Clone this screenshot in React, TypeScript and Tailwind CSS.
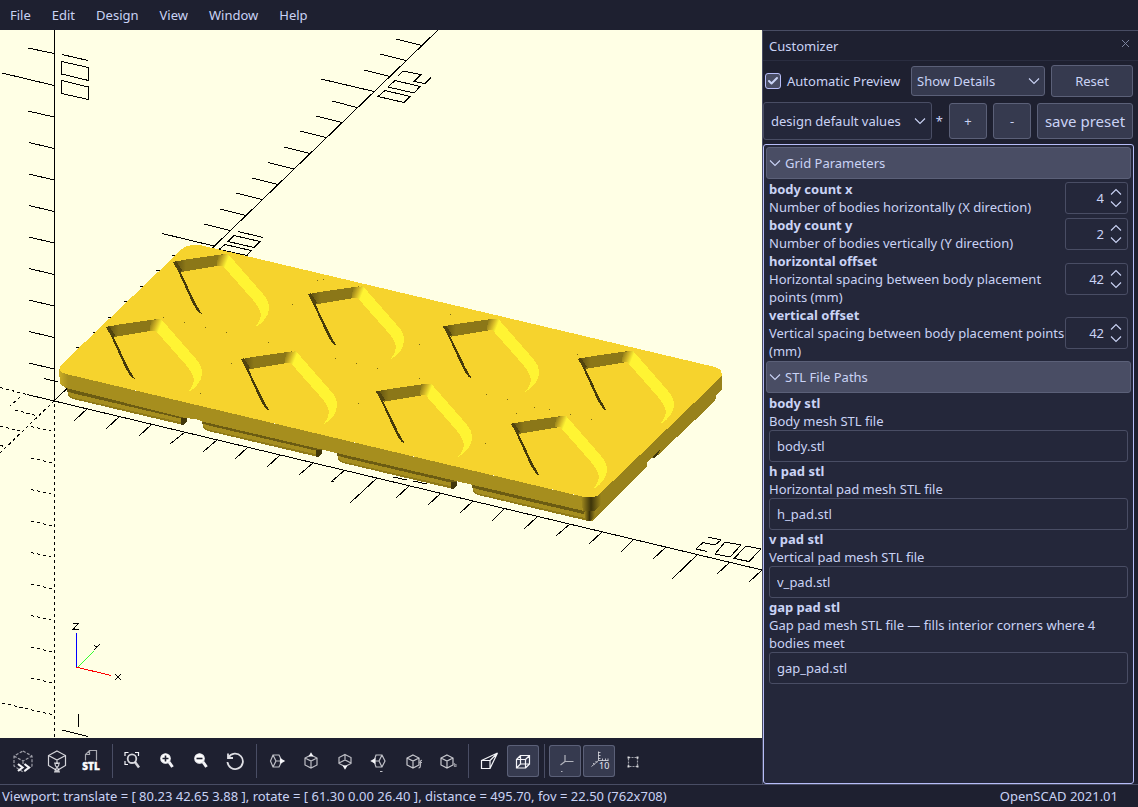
import React, { useId, useState } from "react";
import { Check, X } from "lucide-react";

const menus = ["File", "Edit", "Design", "View", "Window", "Help"];

const CUBE = "M16 10l6 3v7l-6 3-6-3v-7zM10 13l6 3 6-3M16 16v7";

const toolGroups = [
  [
    {
      label: "Preview",
      icon: (
        <>
          <path
            d="M16 6l9 5v10l-9 6-9-6v-10zM7 11l9 5 9-5M16 16v3"
            strokeDasharray="3 1.5"
            opacity="0.6"
          />
          <path d="M11 19l4.5 3.5-4.5 3.5M17.5 19l4.5 3.5-4.5 3.5" strokeWidth="2.2" />
        </>
      ),
    },
    {
      label: "Render",
      icon: (
        <>
          <path
            d="M16 6l8.500 4.500v10l-8.500 5-8.500-5v-10zM7.500 10.500l8.500 4.500 8.500-4.500M16 15v4"
            opacity="0.85"
          />
          <path
            d="M13 18h6M13 27h6M14 18.500q0 2.500 2 4q-2 1.500-2 4h4q0-2.500-2-4q2-1.500 2-4z"
            opacity="0.8"
          />
        </>
      ),
    },
    {
      label: "Export as STL",
      icon: (
        <>
          <path d="M10.5 15.5v-6l4-4h7v10M14.5 5.500v4h-4" opacity="0.65" />
          <text
            x="16"
            y="25"
            textAnchor="middle"
            fontSize="10"
            fontWeight="900"
            fill="#fff"
            strokeWidth="0.4"
          >
            STL
          </text>
        </>
      ),
    },
  ],
  [
    {
      label: "View All",
      icon: (
        <>
          <path d="M8 11v-3.500h3.500M18 7.500h3.500v3.500M8 16v3.500h3" />
          <circle cx="15" cy="13.7" r="4.3" strokeWidth="1.8" opacity="0.85" />
          <path d="M18 17l4 5.500" strokeWidth="2.5" opacity="0.85" />
        </>
      ),
    },
    {
      label: "Zoom In",
      icon: (
        <>
          <circle cx="14.5" cy="13.5" r="4.7" fill="#fff" />
          <path d="M18 17l3.500 5" strokeWidth="3" />
          <path d="M11.5 13.500h6M14.500 10.500v6" stroke="#1e2030" strokeWidth="1.6" />
        </>
      ),
    },
    {
      label: "Zoom Out",
      icon: (
        <>
          <circle cx="14.5" cy="13.5" r="4.7" fill="#fff" />
          <path d="M18 17l3.500 5" strokeWidth="3" />
          <path d="M11.5 13.500h6" stroke="#1e2030" strokeWidth="1.6" />
        </>
      ),
    },
    {
      label: "Reset View",
      icon: <path d="M9.500 12.500a7.700 7.700 0 1 1-1 4.500M9 8.500v4.500h5" strokeWidth="1.8" opacity="0.9" />,
    },
  ],
  [
    {
      label: "Right",
      icon: (
        <>
          <path d="M12 10h6l3 6-3 6h-6l-2.500-6zM12 10l3 6-3 6M15 16h5" opacity="0.75" />
          <path d="M19.500 14l3.500 2-3.500 2z" fill="#fff" />
        </>
      ),
    },
    {
      label: "Top",
      icon: (
        <>
          <path d={CUBE} opacity="0.75" />
          <path d="M14.500 11l1.500-2.500 1.500 2.500z" fill="#fff" />
        </>
      ),
    },
    {
      label: "Bottom",
      icon: (
        <>
          <path d="M16 9.500l6 3v6l-6 3-6-3v-6zM10 18l6-3 6 3M16 9.500v5.500" opacity="0.75" />
          <path d="M14.500 21l1.500 2.500 1.500-2.500z" fill="#fff" />
        </>
      ),
    },
    {
      label: "Left",
      icon: (
        <>
          <path d="M13 10h6l3 6-3 6h-6l-2-6zM19 10l-3 6 3 6M16 16h-5M17 26.500h2.500" opacity="0.75" />
          <path d="M12 14l-3.500 2 3.500 2z" fill="#fff" />
        </>
      ),
    },
    {
      label: "Front",
      icon: (
        <>
          <path d={CUBE} opacity="0.8" />
          <path d="M25 15.500q-1.500-0.500-1.500 1.500v3q0 3-2 3M22.500 17.500h2.500" opacity="0.7" />
        </>
      ),
    },
    {
      label: "Back",
      icon: (
        <>
          <path d={CUBE} opacity="0.8" />
          <path d="M23.500 18v3.500h1.500v-2h-1.500" opacity="0.5" />
        </>
      ),
    },
  ],
  [
    {
      label: "Perspective",
      icon: (
        <path d="M8.500 15.500h8.500v8h-8.500zM8.500 15.500l16-7.500-7.500 7.500M24.500 8l-7.500 15.500" />
      ),
    },
    {
      label: "Orthogonal",
      active: true,
      icon: (
        <path d="M9.500 14.500h9v8.500h-9zM13.500 10.500h9v8.500h-9zM9.500 14.500l4-4M18.500 14.500l4-4M9.500 23l4-4M18.500 23l4-4" />
      ),
    },
  ],
  [
    {
      label: "Show Axes",
      active: true,
      icon: <path d="M16 10v6.500h8.500M16 16.500l-4.500 3.500M12 26.500h1.500" opacity="0.65" />,
    },
    {
      label: "Show Scale Markers",
      active: true,
      icon: (
        <>
          <path
            d="M15.500 6.500v9h10M15.500 7.500h2M15.500 10.500h2M15.500 13.500h2M19.500 15.500v-2M22.500 15.500v-2M25 15.500v-2M15.500 15.500l-7 6M12.500 16l1.500 1.500M10 18l1.500 1.500"
            strokeWidth="1"
            opacity="0.7"
          />
          <text x="16" y="24" fontSize="9" fill="#e6e9f5" stroke="none">
            10
          </text>
        </>
      ),
    },
    {
      label: "Show Edges",
      icon: (
        <>
          <path d="M11.500 12.500h9v9h-9z" strokeDasharray="2 1" opacity="0.6" />
          <path
            d="M10.500 11.500h2v2h-2zM19.500 11.500h2v2h-2zM10.500 20.500h2v2h-2zM19.500 20.500h2v2h-2z"
            fill="#fff"
            stroke="none"
            opacity="0.8"
          />
        </>
      ),
    },
  ],
];

const numberParams = [
  { name: "body count x", text: "Number of bodies horizontally (X direction)", value: 4 },
  { name: "body count y", text: "Number of bodies vertically (Y direction)", value: 2 },
  {
    name: "horizontal offset",
    text: "Horizontal spacing between body placement points (mm)",
    value: 42,
  },
  {
    name: "vertical offset",
    text: "Vertical spacing between body placement points (mm)",
    value: 42,
  },
];

const fileParams = [
  { name: "body stl", text: "Body mesh STL file", value: "body.stl" },
  { name: "h pad stl", text: "Horizontal pad mesh STL file", value: "h_pad.stl" },
  { name: "v pad stl", text: "Vertical pad mesh STL file", value: "v_pad.stl" },
  {
    name: "gap pad stl",
    text: "Gap pad mesh STL file — fills interior corners where 4 bodies meet",
    value: "gap_pad.stl",
  },
];

// axis, ticks and scale digits, in viewport coordinates
const axisLines = [
  "M54.500 30V401M27 394.500L762 570M54 401L438 30",
  "M28 48l26 5.500M2 73l52 12.500M28 111l26 6M29 142.500l25 6M29 174l25 6M29 205.500l25 6M29 237l25 6M29 268.500l25 6M29 300l25 6M29 331.500l25 6M29 363l25 6M44 378.500l14 3.500",
  "M396 39l26 6.500M380 54l26 6.500M364 70l26 6.500M321 79l53 12.500M332 101l25 6.500M316 116l26 6.500M300 131l26 6.500M284 147l26 6.500M268 162.500l26 6.500M252 178l26 6.500M236 193l26 6.500M220 209l26 6.500M204 224l26 6.500M162 233.500l52 12.500",
  "M172 255l4 1M156 270l4 1M140 286l4 1M124 301l4 1M108 317l4 1M93 332l3 1M76 347l4 1",
  "M88 408l-14 13M120 416l-14 13M152 424l-13 12M185 432l-15 12M217 440l-14 12M248 447l-13 12M280 455l-13 12M313 463l-14 12M345 470l-14 12M377 478l-27 25M409 486l-13 12M441 493l-13 12M473 501l-13 12M505 508l-13 13M537 517l-13 12M570 524l-14 12M602 532l-13 12M634 539l-13 13M666 547l-13 12M698 554l-26 25M730 562l-13 12M762 570l-13 12",
  "M62 54.500l26 6M61.500 61.500l27 6v13l-27-6.500zM61.500 80.500l27 6.500v12.500l-27-6z",
  "M238 231.500l25 6M234 235.500l26 6-6 6-26-6zM225 244.500l26 6-4 5-28-6z",
  "M398 76l5-5 18 3.500-7 7 11 2 6-6M395 80.500l25 6-6 6.500-26-6zM385 90.500l25 6-6 6-26-6z",
  "M708 537l13 3-6 5-12-2.500-7 6.500 11 2.500M725 542l16 3-11 12-15-3zM746 546l15 3-12 12.500-15-3z",
  "M78.500 714v13M62 730l26 6.500M393 477l14 3M413 481l14 3M331 481l3 0.500",
];

const dashedLines = [
  "M54.500 404V738M0 387.500L27 394.500M54 401L0 453M20 397l-10 9",
  "M15 410l23 6M0 426l20 5M0 445l5 2",
  "M31 426.500l22 5M31 458l22 5M31 489.500l22 5M31 521l22 5M31 552.500l22 5M31 584l22 5M31 615.500l22 5M31 647l22 5M31 678l22 5M2 703l52 12",
];

const specks =
  "M317 280h1M323 279h1M292 304h1M163 317h1M184 322h1M205 327h1M226 332h1M268 342h1M231 363h1M335 358h1M356 363h1M200 393h1M358 403h1M450 314h1M419 344h1M419 378h1M486 394h1M507 399h1M534 407h1M549 409h1M570 414h1M591 419h1M516 413h1M485 443h1M577 354h1M377 368h1";

function Pocket({ x, y }: { x: number; y: number }) {
  return (
    <g transform={`translate(${x} ${y})`}>
      <path d="M173 262L183 260L224 254L220 265.500L181 272L178 271z" fill="url(#back)" />
      <path
        d="M218 255L228 254L263 294Q269 300.500 269 308Q269 319 255 327.500Q262 319 260.500 313Q259 307 253 300L222.500 265.500L217 265.500z"
        fill="url(#slope)"
      />
      <path d="M173 262L176 261L182 270L179 273z" fill="#51440e" />
      <path d="M177.500 270L180.500 272L195.500 303L201.500 313.500L199 312.500L196 309L192 302z" fill="#453a0b" />
    </g>
  );
}

function Foot({ x, y, end }: { x: number; y: number; end?: boolean }) {
  return (
    <g transform={`translate(${x} ${y})`}>
      <path d="M67 388L187 416V421L184 424.500H181L73 399L68 396z" fill="#8f7a18" />
      <path d="M68 392L182 418.500V422.500L73 397.500L69 395z" fill="#a68e1e" />
      <path d="M67 388L187 415V420L76 394L67 391.500z" fill="#6b5b12" />
      {!end && <path d="M181 418L187 418.500V422L184 424.500H181z" fill="#41370b" />}
    </g>
  );
}

function Scene() {
  return (
    <svg
      viewBox="0 30 762 708"
      preserveAspectRatio="xMinYMin slice"
      className="block h-full w-full"
      shapeRendering="crispEdges"
      role="img"
      aria-label="3D view"
    >
      <defs>
        <linearGradient id="slope" gradientUnits="userSpaceOnUse" x1="217" y1="258" x2="227" y2="262">
          <stop offset="0" stopColor="#8b7718" />
          <stop offset="0.55" stopColor="#d2b526" />
          <stop offset="1" stopColor="#fff433" />
        </linearGradient>
        <linearGradient id="back" x1="0" x2="1" y1="0" y2="0">
          <stop offset="0" stopColor="#57490f" />
          <stop offset="0.25" stopColor="#8b7718" />
          <stop offset="1" stopColor="#8b7718" />
        </linearGradient>
        <linearGradient id="corner" x1="0" x2="1" y1="0" y2="0">
          <stop offset="0" stopColor="#a68e1e" />
          <stop offset="0.5" stopColor="#3d340a" />
          <stop offset="1" stopColor="#98821b" />
        </linearGradient>
        <linearGradient id="left" x1="0" x2="1" y1="0" y2="0">
          <stop offset="0" stopColor="#cbae26" />
          <stop offset="1" stopColor="#a68e1e" />
        </linearGradient>
      </defs>
      <path d={axisLines.join("")} fill="none" stroke="#000" />
      <path d={dashedLines.join("")} fill="none" stroke="#000" strokeDasharray="3 3" />

      {/* side face and the feet under it */}
      <path
        d="M590 500L716 385V398L714 402L658 455L654 458L650 457L647 461V466L592 521L584 516z"
        fill="#98821b"
      />
      <path d="M652 457L660 450L657 456L654 458z" fill="#41370b" />
      <Foot x={0} y={0} />
      <Foot x={135} y={32} />
      <Foot x={270} y={64} />
      <Foot x={405} y={96} end />
      <path d="M584 512L595 508V516L590 521H586z" fill="url(#corner)" />
      <path d="M598 494L722 376V389L713 399L598 509z" fill="#98821b" />
      <path d="M59 369L66 374L584 497V511L202 421.500Q196 418 187 418.500L66 388L60 384z" fill="#a68e1e" />
      <path d="M59 369L68 374V388L60 384z" fill="url(#left)" />
      <path d="M581 497L601 493V505L594 511H583z" fill="url(#corner)" />
      <path
        d="M60 366L182 249Q187 244 202 245.500L715 367Q724 370 721 377L599 494.500Q594 499 582 496.500L66 374Q58 372 60 366z"
        fill="#f6d32d"
      />
      <path d={specks} stroke="#7c6a15" />
      {[0, 1, 2, 3].map((i) => (
        <React.Fragment key={i}>
          <Pocket x={i * 135} y={i * 32.3} />
          <Pocket x={i * 135 - 67} y={i * 32.3 + 65} />
        </React.Fragment>
      ))}

      {/* orientation gizmo */}
      <g fill="none">
        <path d="M77 666.500L93 650.500" stroke="#0f0" strokeWidth="0.8" />
        <path d="M76 667L111 675.500" stroke="#f00" />
        <path d="M76.500 633V667" stroke="#00f" />
        <path
          d="M73 623.500H78.500L73 629.500H79M94 645l3 2.500M100 644l-6 6M115 674l6 6M121 674l-6 6"
          stroke="#000"
        />
      </g>
    </svg>
  );
}

function Chevron({ up, className }: { up?: boolean; className?: string }) {
  return (
    <svg width="12" height="8" viewBox="0 0 12 8" className={className} fill="none" stroke="currentColor">
      <path d={up ? "M1 6.500L6 1.500L11 6.500" : "M1 1.500L6 6.500L11 1.500"} strokeWidth="1.1" />
    </svg>
  );
}

function GroupHeader({ title }: { title: string }) {
  return (
    <button className="flex h-8 w-full items-center gap-1 rounded-[3px] border border-[#5b6078] bg-[#494d64] px-0.5 text-left">
      <Chevron />
      {title}
    </button>
  );
}

function NumberParam({ name, text, value }: { name: string; text: string; value: number }) {
  const id = useId();
  const [current, setCurrent] = useState(value);
  return (
    <div className="flex items-center px-[3px]">
      <label htmlFor={id} className="min-w-0 flex-1">
        <b className="block">{name}</b>
        <span className="-mr-1 block">{text}</span>
      </label>
      <div className="flex h-8 w-[63px] shrink-0 items-center gap-1.5 rounded-[3px] border border-[#494d64] pr-[5px]">
        <input
          id={id}
          inputMode="numeric"
          value={current}
          onChange={(e) => setCurrent(Number(e.target.value) || 0)}
          className="w-full min-w-0 bg-transparent text-right outline-none"
        />
        <div className="flex shrink-0 flex-col gap-1">
          <button aria-label={`Increase ${name}`} onClick={() => setCurrent(current + 1)}>
            <Chevron up />
          </button>
          <button aria-label={`Decrease ${name}`} onClick={() => setCurrent(current - 1)}>
            <Chevron />
          </button>
        </div>
      </div>
    </div>
  );
}

function FileParam({ name, text, value }: { name: string; text: string; value: string }) {
  const id = useId();
  return (
    <div className="px-[3px]">
      <label htmlFor={id} className="block">
        <b className="block">{name}</b>
        {text}
      </label>
      <input
        id={id}
        defaultValue={value}
        className="block h-8 w-full rounded-[3px] border border-[#494d64] bg-transparent px-[7px] outline-none"
      />
    </div>
  );
}

function Customizer() {
  return (
    <aside className="flex w-[376px] shrink-0 flex-col border-t border-l border-[#494d64]">
      <div className="flex h-[30px] shrink-0 items-center justify-between border-b border-[#2a2d40] px-1.5">
        <h2>Customizer</h2>
        <button aria-label="Close" className="pb-1 text-[#8087a2]">
          <X size={13} strokeWidth={1.8} />
        </button>
      </div>

      <div className="flex h-10 shrink-0 items-center gap-1.5 pr-[5px] pl-0.5">
        <label className="flex flex-1 items-center gap-1.5">
          <span className="relative flex">
            <input
              type="checkbox"
              defaultChecked
              className="peer size-4 appearance-none rounded-[3px] border border-[#b7bdf8] bg-[#494d64]"
            />
            <Check
              size={12}
              strokeWidth={4}
              className="pointer-events-none absolute top-0.5 left-0.5 hidden peer-checked:block"
            />
          </span>
          Automatic Preview
        </label>
        <div className="relative">
          <select
            aria-label="Detail level"
            className="block h-[30px] w-[134px] appearance-none rounded-[3px] border border-[#5b6078] bg-[#363a4f] pl-[5px]"
          >
            <option>Show Details</option>
          </select>
          <Chevron className="pointer-events-none absolute top-[11px] right-[5px]" />
        </div>
        <button className="h-8 w-[82px] rounded-[3px] border border-[#5b6078] bg-[#363a4f]">
          Reset
        </button>
      </div>

      <div className="flex h-10 shrink-0 items-center pr-[5px]">
        <div className="relative mr-1 flex-1">
          <select
            aria-label="Preset"
            className="block h-[38px] w-full appearance-none rounded-[3px] border border-[#494d64] bg-[#24273a] pl-[7px]"
          >
            <option>design default values</option>
          </select>
          <Chevron className="pointer-events-none absolute top-[15px] right-1.5" />
        </div>
        <span className="mr-1.5">*</span>
        <div className="flex gap-1.5">
          <button className="h-9 w-[38px] rounded-[3px] border border-[#5b6078] bg-[#363a4f]">+</button>
          <button className="h-9 w-[38px] rounded-[3px] border border-[#5b6078] bg-[#363a4f]">-</button>
          <button className="h-9 w-24 rounded-[3px] border border-[#5b6078] bg-[#363a4f] text-[15px]">
            save preset
          </button>
        </div>
      </div>

      <div className="mt-[3px] mr-1 flex-1 rounded-[3px] border border-[#b7bdf8] bg-[#24273a] p-0.5">
        <GroupHeader title="Grid Parameters" />
        <div className="py-px">
          {numberParams.map((p) => (
            <NumberParam key={p.name} {...p} />
          ))}
        </div>
        <GroupHeader title="STL File Paths" />
        <div className="py-px">
          {fileParams.map((p) => (
            <FileParam key={p.name} {...p} />
          ))}
        </div>
      </div>
    </aside>
  );
}

export default function App() {
  return (
    <div className="flex min-h-screen flex-col bg-[#1e2030] font-['Noto_Sans',sans-serif] text-[13px] leading-[18px] text-[#cad3f5]">
      <nav className="flex h-[30px] shrink-0 items-center gap-px">
        {menus.map((menu) => (
          <button key={menu} className="px-2.5">
            {menu}
          </button>
        ))}
      </nav>

      <div className="flex flex-1">
        <main className="flex min-w-0 flex-1 flex-col">
          <div className="min-h-0 flex-1 overflow-hidden bg-[#ffffe5]">
            <Scene />
          </div>
          <div className="flex h-[46px] shrink-0 items-center gap-0.5 pl-[7px]">
            {toolGroups.map((group, i) => (
              <React.Fragment key={i}>
                {i > 0 && <span className="mr-0.5 ml-[3px] h-[34px] w-px bg-[#494d64]" />}
                {group.map((tool) => (
                  <button
                    key={tool.label}
                    aria-label={tool.label}
                    className={
                      "active" in tool && tool.active
                        ? "size-8 rounded-[3px] bg-[#363a4f] ring-1 ring-[#5b6078] ring-inset"
                        : "size-8"
                    }
                  >
                    <svg viewBox="0 0 32 32" className="size-8" fill="none" stroke="#f4f4f8" strokeWidth="1.2">
                      {tool.icon}
                    </svg>
                  </button>
                ))}
              </React.Fragment>
            ))}
          </div>
        </main>
        <Customizer />
      </div>

      <footer className="flex h-[23px] shrink-0 items-center justify-between border-t border-[#494d64] pr-5 pl-0.5">
        <span>
          Viewport: translate = [ 80.23 42.65 3.88 ], rotate = [ 61.30 0.00 26.40 ], distance = 495.70, fov
          = 22.50 (762x708)
        </span>
        <span>OpenSCAD 2021.01</span>
      </footer>
    </div>
  );
}
